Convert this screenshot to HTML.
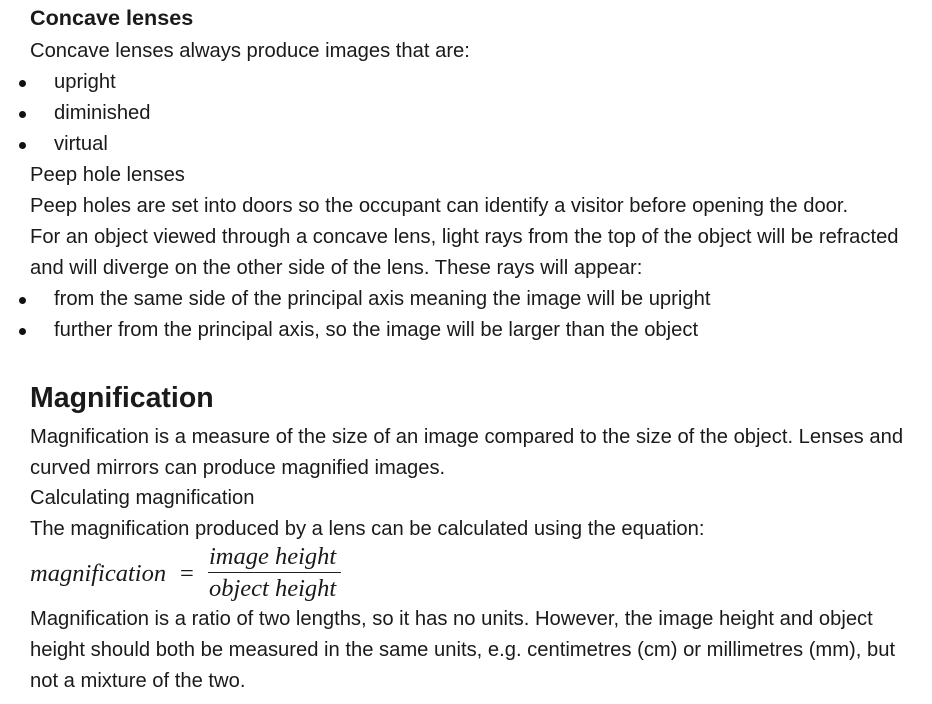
<!DOCTYPE html>
<html><head><meta charset="utf-8"><style>
body{margin:0;width:932px;height:704px;background:#fff;position:relative;overflow:hidden;font-family:"Liberation Sans",sans-serif;color:#1a1a1a}
.l{position:absolute;left:30px;white-space:nowrap;font-size:20.2px;line-height:22px;height:22px}
.b{left:54px}
.b:before{content:"";position:absolute;left:-35px;top:9px;width:7px;height:7px;border-radius:50%;background:#111}
.m{font-family:"Liberation Serif",serif;font-style:italic;font-size:24.5px;position:absolute;white-space:nowrap;line-height:26px}
</style></head><body>
<div class="l" style="top:5px;font-weight:bold;font-size:21.6px;line-height:26px;height:26px">Concave lenses</div>
<div class="l" style="top:40px">Concave lenses always produce images that are:</div>
<div class="l b" style="top:71px">upright</div>
<div class="l b" style="top:102px">diminished</div>
<div class="l b" style="top:133px">virtual</div>
<div class="l" style="top:164px">Peep hole lenses</div>
<div class="l" style="top:195px">Peep holes are set into doors so the occupant can identify a visitor before opening the door.</div>
<div class="l" style="top:226px">For an object viewed through a concave lens, light rays from the top of the object will be refracted</div>
<div class="l" style="top:257px">and will diverge on the other side of the lens. These rays will appear:</div>
<div class="l b" style="top:288px">from the same side of the principal axis meaning the image will be upright</div>
<div class="l b" style="top:319px">further from the principal axis, so the image will be larger than the object</div>
<div class="l" style="top:380px;font-weight:bold;font-size:28.5px;line-height:36px;height:36px">Magnification</div>
<div class="l" style="top:426px">Magnification is a measure of the size of an image compared to the size of the object. Lenses and</div>
<div class="l" style="top:457px">curved mirrors can produce magnified images.</div>
<div class="l" style="top:487px">Calculating magnification</div>
<div class="l" style="top:518px">The magnification produced by a lens can be calculated using the equation:</div>
<div class="m" style="left:30px;top:561px">magnification</div>
<div class="m" style="left:180px;top:561px;font-style:normal">=</div>
<div class="m" style="left:209px;top:544px">image height</div>
<div style="position:absolute;left:208px;top:572px;width:133px;height:1px;background:#222"></div>
<div class="m" style="left:209px;top:576px">object height</div>
<div class="l" style="top:608px">Magnification is a ratio of two lengths, so it has no units. However, the image height and object</div>
<div class="l" style="top:639px">height should both be measured in the same units, e.g. centimetres (cm) or millimetres (mm), but</div>
<div class="l" style="top:670px">not a mixture of the two.</div>
</body></html>
